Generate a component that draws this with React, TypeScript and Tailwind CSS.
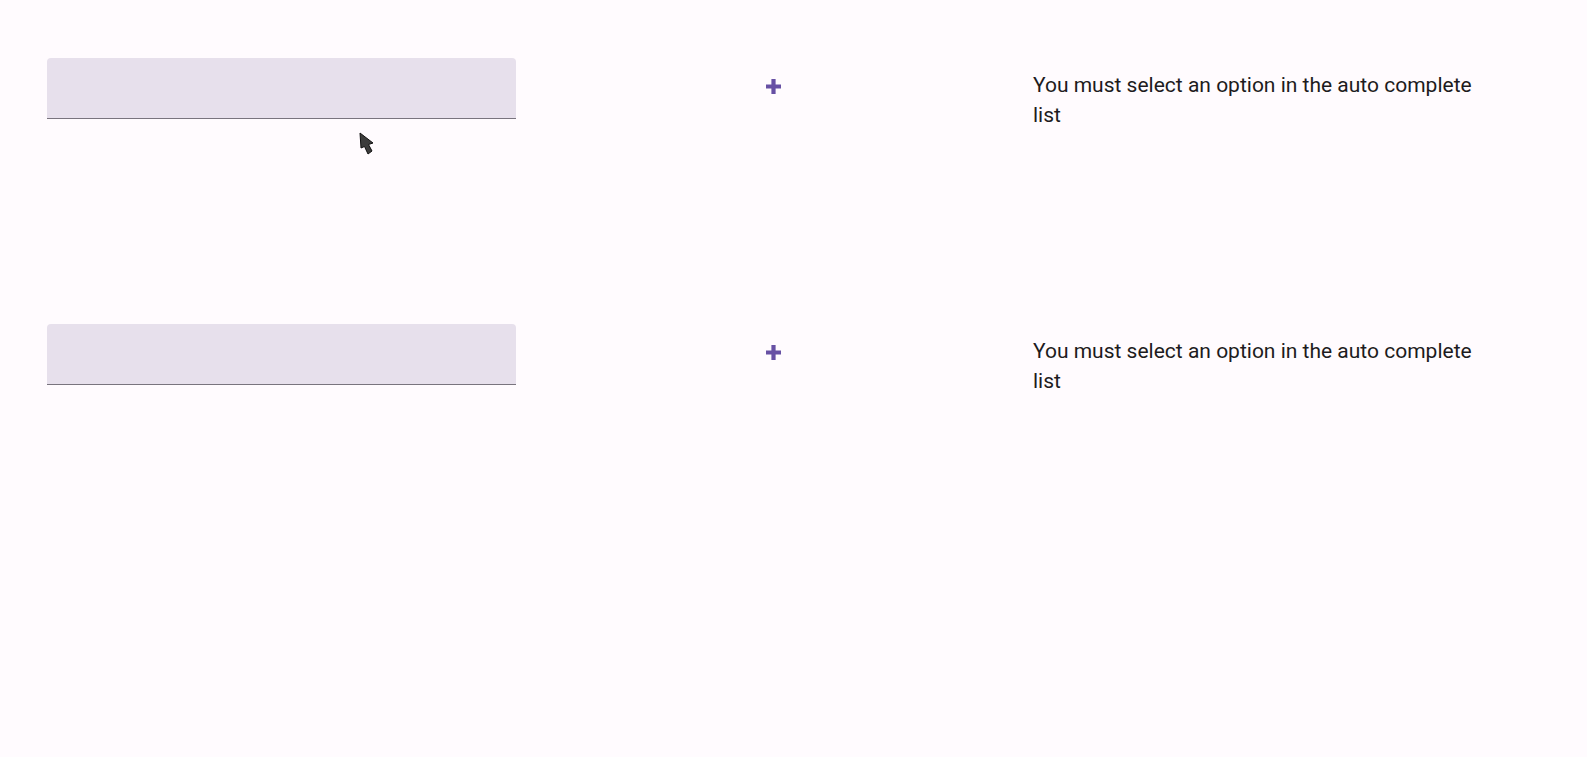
import React from 'react'

function PlusIcon() {
  return (
    <svg width="17" height="17" viewBox="0 0 17 17" className="block">
      <path d="M8.5 1v15M1 8.5h15" stroke="#6750a4" strokeWidth="4.2" strokeLinecap="butt" />
    </svg>
  )
}

function Cursor() {
  return (
    <svg width="20" height="26" viewBox="0 0 20 26" className="absolute left-[357px] top-[131px]">
      <path
        d="M3 2 L4 17 L7.5 15.5 L11 23 L15 20 L11.5 13.5 L16 12 Z"
        fill="#3c3c3c"
        stroke="#111"
        strokeWidth="1"
        strokeLinejoin="round"
      />
    </svg>
  )
}

function Row() {
  return (
    <div className="flex items-start h-[266px]">
      <div className="w-[469px] h-[61px] bg-[#e7e0ec] rounded-t-[4px] border-b border-[#79747e]" />
      <div className="ml-[249px] mt-[20px]">
        <PlusIcon />
      </div>
      <p className="ml-[251px] mt-[12px] w-[455px] text-[21px] leading-[30px] text-[#1d1b20]">
        You must select an option in the auto complete list
      </p>
    </div>
  )
}

export default function App() {
  return (
    <div
      className="relative min-h-screen bg-[#fffbfe] pt-[58px] pl-[47px]"
      style={{ fontFamily: 'Roboto, "Liberation Sans", sans-serif' }}
    >
      <Row />
      <Row />
      <Cursor />
    </div>
  )
}
